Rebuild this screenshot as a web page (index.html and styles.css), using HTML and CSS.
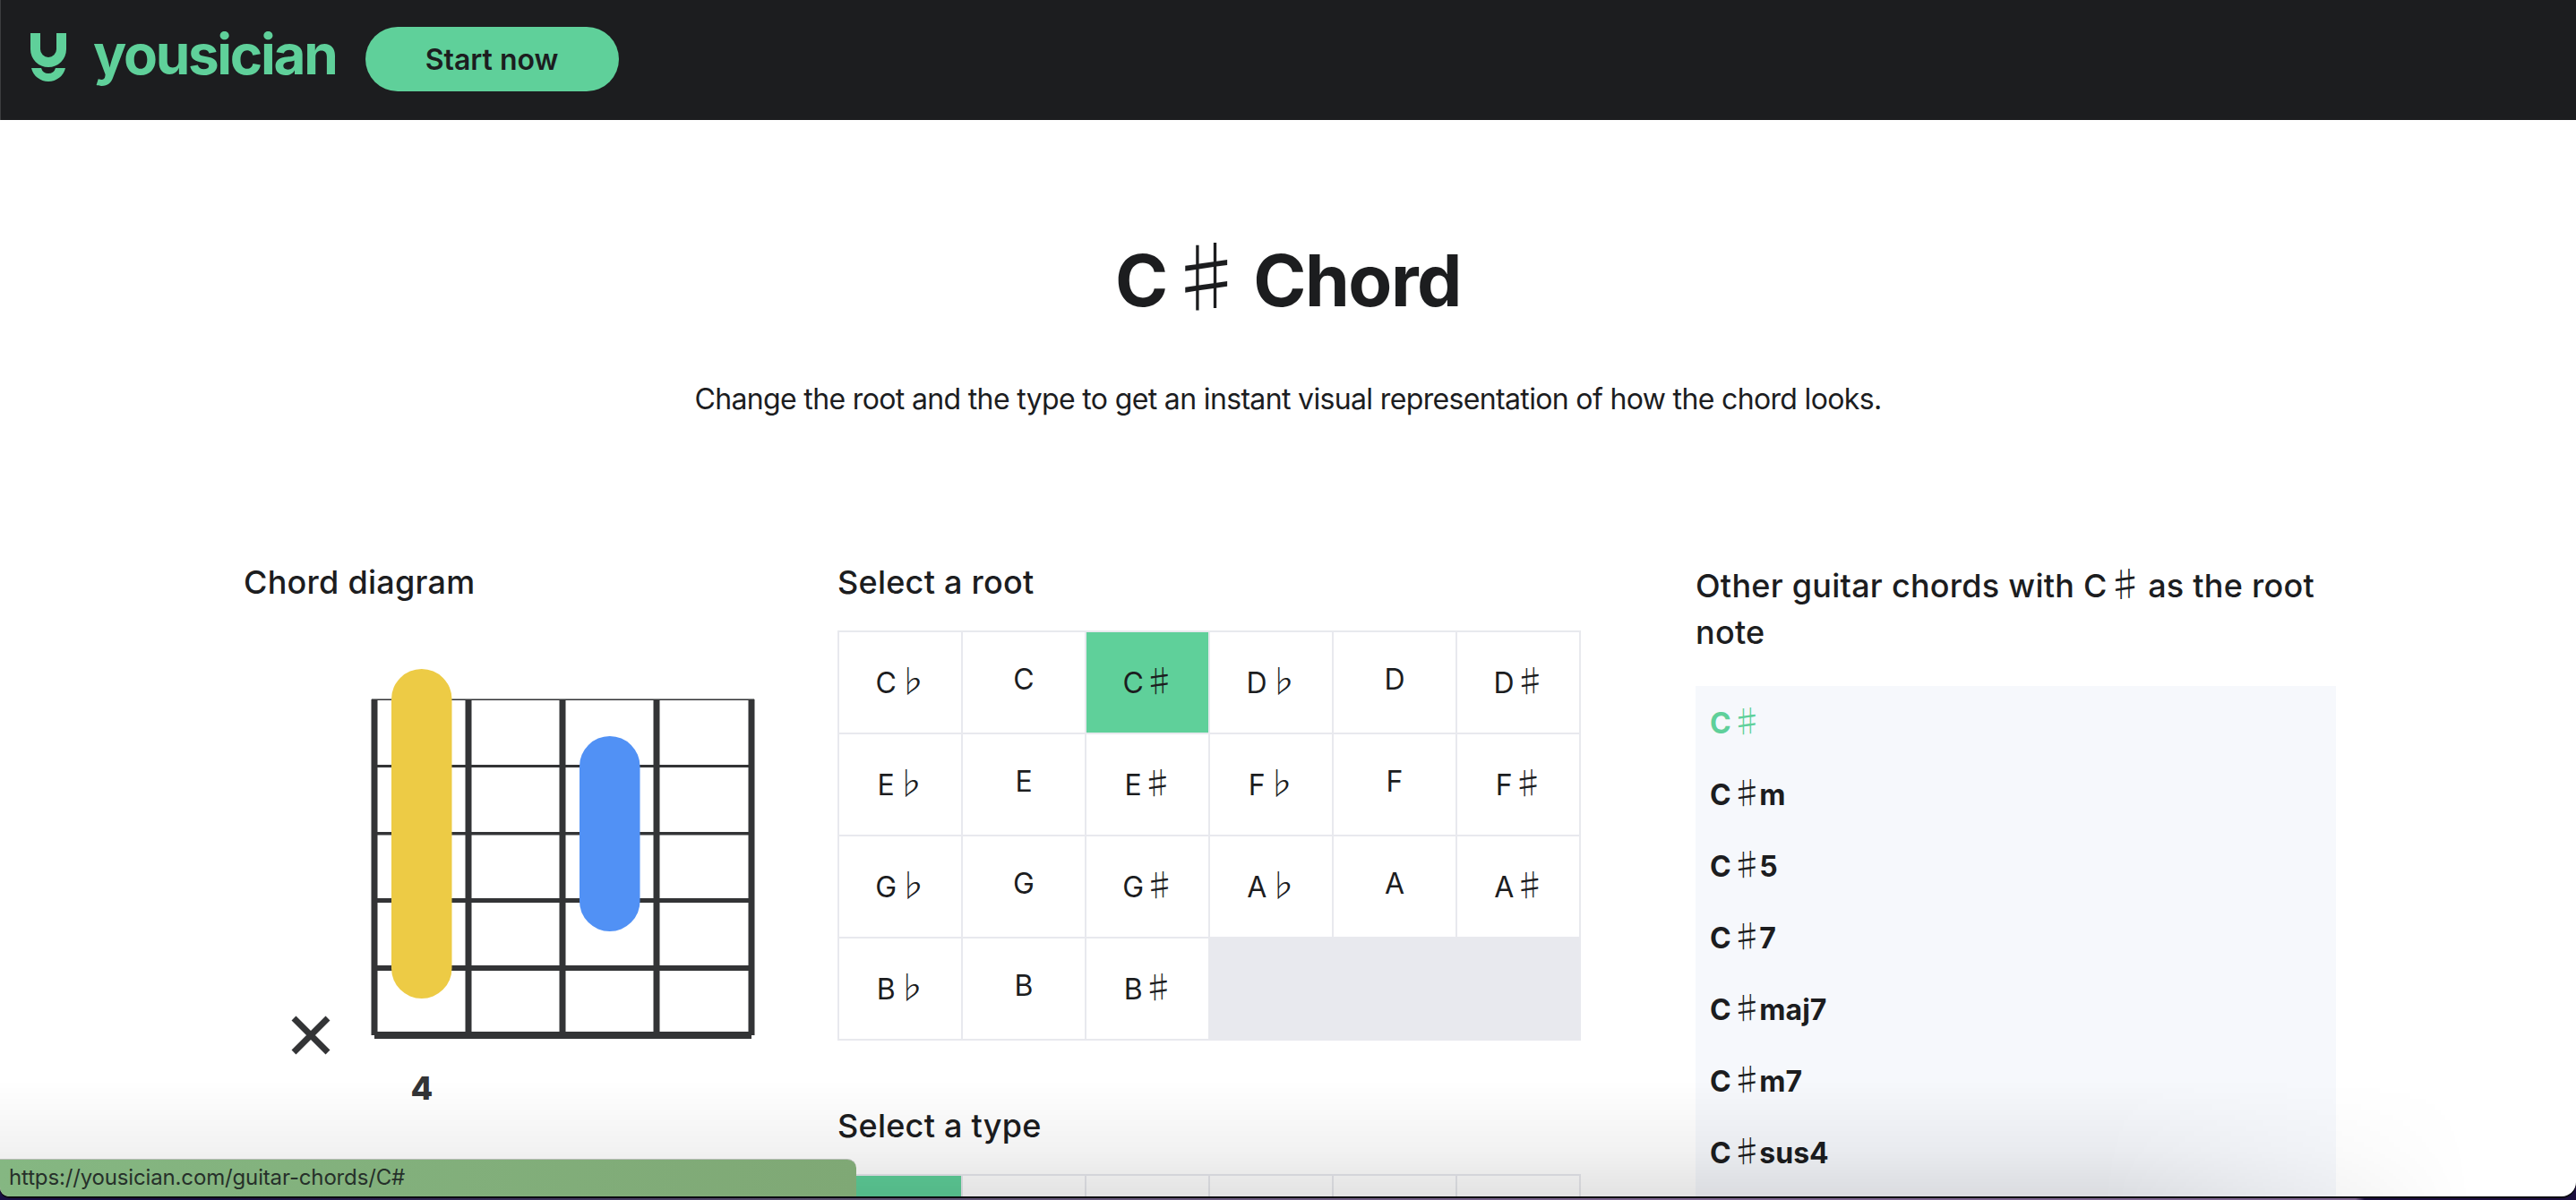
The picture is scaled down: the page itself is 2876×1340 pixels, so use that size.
FILE: index.html
```html
<!DOCTYPE html>
<html lang="en">
<head>
    <meta charset="UTF-8">
    <meta name="viewport" content="width=device-width, initial-scale=1.0">
    <title>C# Chord</title>
    <link rel="stylesheet" href="styles.css">
</head>
<body>
    <div class="window">
        <nav class="topbar">
            <a class="brand" href="#">
                <svg class="brandMark" viewBox="0 0 40 58">
                    <path d="M0 0h11v18a9 9 0 0 0 18 0V0h11v18a20 20 0 0 1-40 0z"/>
                    <path d="M1 39h11a8.33 8.33 0 0 0 16 0h11a19.5 19.5 0 0 1-38 0z"/>
                </svg>
                <span class="brandName">yousician</span>
            </a>
            <a class="startBtn" href="#">Start now</a>
        </nav>

        <header class="intro">
            <h1>C<span class="acc">♯</span> Chord</h1>
            <p>Change the root and the type to get an instant visual representation of how the chord looks.</p>
        </header>

        <main class="columns">
            <section>
                <h2>Chord diagram</h2>
                <svg class="diagram" viewBox="272 704 583 540">
                    <g class="frets">
                        <rect x="415" y="780.5" width="427" height="1.5"/>
                        <rect x="415" y="854" width="427" height="3"/>
                        <rect x="415" y="929" width="427" height="3.5"/>
                        <rect x="415" y="1003" width="427" height="5"/>
                        <rect x="415" y="1078" width="427" height="6"/>
                        <rect x="418" y="1152" width="421" height="8"/>
                        <rect x="414.5" y="781" width="7" height="375"/>
                        <rect x="519.5" y="781" width="7" height="375"/>
                        <rect x="624.5" y="781" width="7" height="375"/>
                        <rect x="729.5" y="781" width="7" height="375"/>
                        <rect x="835.5" y="781" width="7" height="375"/>
                    </g>
                    <rect class="fingerOne" x="437" y="747" width="67.5" height="368" rx="33.75"/>
                    <rect class="fingerTwo" x="647" y="822" width="67.5" height="218" rx="33.75"/>
                    <path class="muted" d="M328 1137l38 38M366 1137l-38 38"/>
                    <text class="fretNum" x="471" y="1228" text-anchor="middle">4</text>
                </svg>
            </section>

            <section>
                <h2>Select a root</h2>
                <div class="noteGrid">
                    <a class="note"><span>C<span class="acc">♭</span></span></a>
                    <a class="note plain"><span>C</span></a>
                    <a class="note active"><span>C<span class="acc">♯</span></span></a>
                    <a class="note"><span>D<span class="acc">♭</span></span></a>
                    <a class="note plain"><span>D</span></a>
                    <a class="note"><span>D<span class="acc">♯</span></span></a>
                    <a class="note"><span>E<span class="acc">♭</span></span></a>
                    <a class="note plain"><span>E</span></a>
                    <a class="note"><span>E<span class="acc">♯</span></span></a>
                    <a class="note"><span>F<span class="acc">♭</span></span></a>
                    <a class="note plain"><span>F</span></a>
                    <a class="note"><span>F<span class="acc">♯</span></span></a>
                    <a class="note"><span>G<span class="acc">♭</span></span></a>
                    <a class="note plain"><span>G</span></a>
                    <a class="note"><span>G<span class="acc">♯</span></span></a>
                    <a class="note"><span>A<span class="acc">♭</span></span></a>
                    <a class="note plain"><span>A</span></a>
                    <a class="note"><span>A<span class="acc">♯</span></span></a>
                    <a class="note"><span>B<span class="acc">♭</span></span></a>
                    <a class="note plain"><span>B</span></a>
                    <a class="note"><span>B<span class="acc">♯</span></span></a>
                </div>

                <h2 class="typeTitle">Select a type</h2>
                <div class="noteGrid">
                    <a class="note active"></a>
                    <a class="note"></a>
                    <a class="note"></a>
                    <a class="note"></a>
                    <a class="note"></a>
                    <a class="note"></a>
                </div>
            </section>

            <section>
                <h2 class="otherTitle">Other guitar chords with C<span class="acc">♯</span> as the root note</h2>
                <ul class="chordList">
                    <li class="current">C<span class="acc">♯</span></li>
                    <li>C<span class="acc">♯</span>m</li>
                    <li>C<span class="acc">♯</span>5</li>
                    <li>C<span class="acc">♯</span>7</li>
                    <li>C<span class="acc">♯</span>maj7</li>
                    <li>C<span class="acc">♯</span>m7</li>
                    <li>C<span class="acc">♯</span>sus4</li>
                </ul>
            </section>
        </main>

        <div class="dockShadow"></div>
        <div class="statusBubble">https://yousician.com/guitar-chords/C#</div>
    </div>
</body>
</html>
```

FILE: styles.css
```css
html, body {
    margin: 0;
    padding: 0;
}

body {
    width: 2876px;
    height: 1340px;
    overflow: hidden;
    background: linear-gradient(90deg, #1a0f45 0, #1a0f45 245px, #5a5070 900px, #7d6490 1900px, #7d6490 2630px, #1c0f3e 2640px);
    font-family: Inter, "Liberation Sans", sans-serif;
    color: #1c1d1f;
}

.window {
    position: relative;
    height: 1336px;
    overflow: hidden;
    background: #fff;
    border-bottom-right-radius: 16px;
    border-bottom-left-radius: 10px;
    box-shadow: 0 2px 0 #0b0b10;
}

.topbar {
    display: flex;
    align-items: center;
    height: 134px;
    padding: 0 0 2px 33px;
    background: #1c1d1f;
    border-left: 1px solid #3c3d3f;
    box-sizing: border-box;
}

.brand {
    display: flex;
    align-items: center;
    gap: 30px;
    color: #5fd09a;
    text-decoration: none;
}

.brandMark {
    width: 40px;
    height: 58px;
    fill: #5fd09a;
}

.brandName {
    padding-bottom: 10px;
    font-size: 62px;
    font-weight: 700;
    letter-spacing: -2.3px;
    line-height: 72px;
}

.startBtn {
    display: flex;
    align-items: center;
    justify-content: center;
    width: 283px;
    height: 72px;
    margin-left: 32px;
    border-radius: 36px;
    background: #5fd09a;
    color: #1c1d1f;
    font-size: 32px;
    font-weight: 600;
    text-decoration: none;
}

/* sharps and flats come from the CJK font, full width and thin */
.acc {
    margin-right: -0.1em;
    font-family: "Noto Sans CJK JP", sans-serif;
    font-size: 1.1em;
    font-weight: 300;
    letter-spacing: 0;
    line-height: 0;
}

.intro {
    padding-top: 131px;
    text-align: center;
}

.intro h1 {
    margin: 0;
    font-size: 80px;
    font-weight: 700;
    letter-spacing: -1.5px;
    line-height: 96px;
}

.intro p {
    margin: 61px 0 0;
    font-size: 32px;
    letter-spacing: -0.65px;
    line-height: 48px;
}

.columns {
    display: grid;
    grid-template-columns: 663px 958px 715px;
    margin-top: 154px;
    padding-left: 272px;
}

h2 {
    margin: 0 0 28px;
    font-size: 36px;
    font-weight: 500;
    letter-spacing: 0.25px;
    line-height: 52px;
}

.otherTitle {
    margin: 4px 0 34px;
}

.typeTitle {
    margin-top: 69px;
}

.diagram {
    display: block;
    width: 583px;
    height: 540px;
}

.frets {
    fill: #333436;
}

.fingerOne {
    fill: #edcb45;
}

.fingerTwo {
    fill: #5191f5;
}

.muted {
    fill: none;
    stroke: #333436;
    stroke-width: 7;
}

.fretNum {
    fill: #333436;
    font-family: Inter, sans-serif;
    font-size: 36px;
    font-weight: 800;
}

.noteGrid {
    display: grid;
    grid-template-columns: repeat(6, 136px);
    grid-auto-rows: 112px;
    gap: 2px;
    width: 830px;
    padding: 2px;
    box-sizing: border-box;
    background: #e8e9ee;
}

.note {
    display: flex;
    align-items: center;
    justify-content: center;
    background: #fff;
    font-size: 32px;
}

.note.plain span {
    margin-bottom: 7px;
}

.note.active {
    background: #5fd09a;
}

.chordList {
    margin: 0;
    padding: 2px 16px 16px;
    list-style: none;
    background: #f6f8fc;
}

.chordList li {
    height: 80px;
    font-size: 32px;
    font-weight: 700;
    line-height: 80px;
}

.chordList .current {
    color: #5fd09a;
}

.dockShadow {
    position: absolute;
    left: 0;
    bottom: 0;
    width: 2760px;
    height: 130px;
    background: linear-gradient(to top, rgba(0, 0, 0, 0.11), rgba(0, 0, 0, 0.05) 40%, rgba(0, 0, 0, 0));
    -webkit-mask-image: linear-gradient(90deg, #000 85%, transparent);
    mask-image: linear-gradient(90deg, #000 85%, transparent);
    pointer-events: none;
}

.statusBubble {
    position: absolute;
    left: 0;
    bottom: 0;
    width: 956px;
    height: 42px;
    padding-left: 10px;
    box-sizing: border-box;
    background: linear-gradient(90deg, #85b782, #7fa875);
    border-top: 1px solid #b8bdb6;
    border-top-right-radius: 10px;
    border-bottom-left-radius: 8px;
    color: #26302a;
    font-size: 24px;
    letter-spacing: -0.15px;
    line-height: 40px;
}
```
